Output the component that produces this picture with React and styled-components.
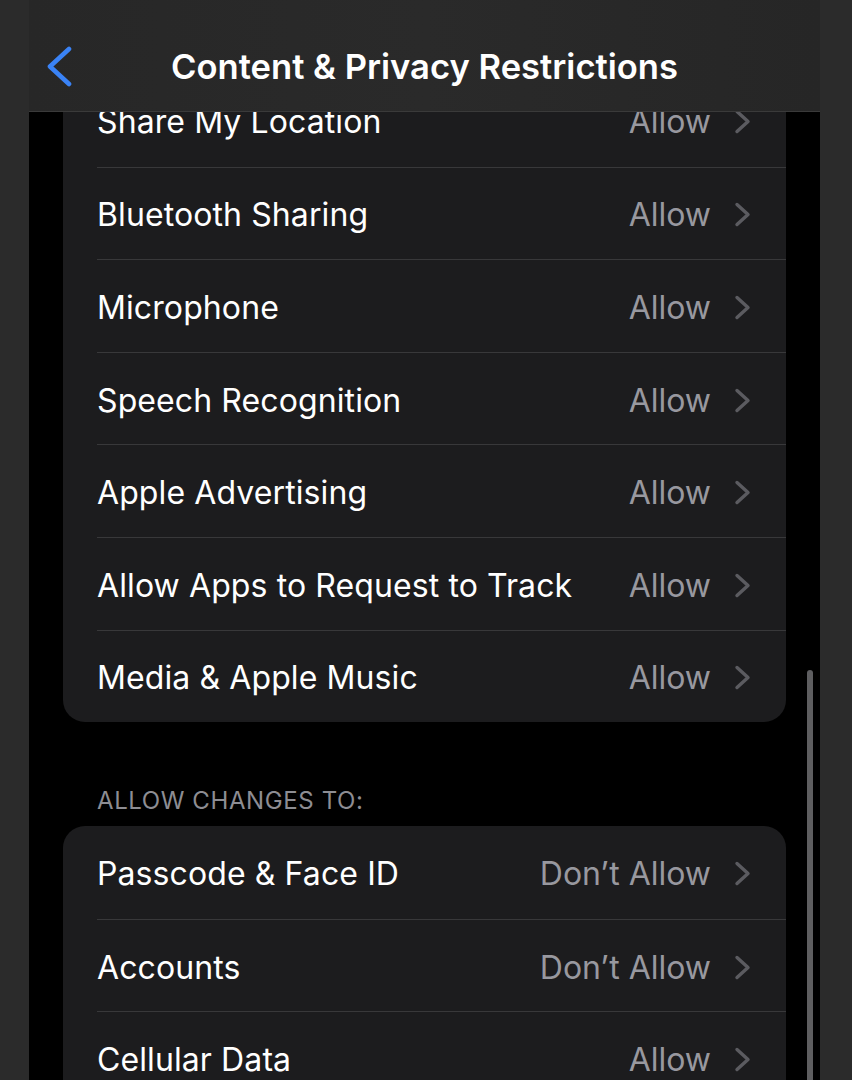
import React from 'react';
import styled, { createGlobalStyle } from 'styled-components';

const GlobalStyle = createGlobalStyle`
  html, body {
    margin: 0;
    padding: 0;
    background: #2b2b2b;
  }
  * {
    box-sizing: border-box;
  }
`;

const firstGroup = [
  { label: 'Share My Location', value: 'Allow' },
  { label: 'Bluetooth Sharing', value: 'Allow' },
  { label: 'Microphone', value: 'Allow' },
  { label: 'Speech Recognition', value: 'Allow' },
  { label: 'Apple Advertising', value: 'Allow' },
  { label: 'Allow Apps to Request to Track', value: 'Allow' },
  { label: 'Media & Apple Music', value: 'Allow' },
];

const changesGroup = [
  { label: 'Passcode & Face ID', value: 'Don’t Allow' },
  { label: 'Accounts', value: 'Don’t Allow' },
  { label: 'Cellular Data', value: 'Allow' },
];

const Chevron = () => (
  <svg width="17" height="25" viewBox="0 0 17 25">
    <polyline
      points="3,2.5 14,12.5 3,22.5"
      fill="none"
      stroke="#5b5b60"
      strokeWidth="3.4"
      strokeLinecap="round"
      strokeLinejoin="round"
    />
  </svg>
);

const BackChevron = () => (
  <svg width="26" height="41" viewBox="0 0 26 41">
    <polyline
      points="23,3 4,20.5 23,38"
      fill="none"
      stroke="#3a83f6"
      strokeWidth="4.6"
      strokeLinecap="round"
      strokeLinejoin="round"
    />
  </svg>
);

const SettingsRow = ({ label, value }) => (
  <Row>
    <RowInner>
      <Label>{label}</Label>
      <Value>{value}</Value>
      <Chevron />
    </RowInner>
  </Row>
);

const App = () => {
  return (
    <>
      <GlobalStyle />
      <Screen>
        <Side />
        <Phone>
          <List>
            <Card>
              {firstGroup.map((r) => (
                <SettingsRow key={r.label} {...r} />
              ))}
            </Card>
            <SectionTitle>ALLOW CHANGES TO:</SectionTitle>
            <Card>
              {changesGroup.map((r) => (
                <SettingsRow key={r.label} {...r} />
              ))}
            </Card>
          </List>
          <Header>
            <NavBar>
              <BackButton>
                <BackChevron />
              </BackButton>
              <Title>Content &amp; Privacy Restrictions</Title>
            </NavBar>
          </Header>
          <ScrollBar />
        </Phone>
        <Side $wide />
      </Screen>
    </>
  );
};

const Screen = styled.div`
  display: flex;
  width: 852px;
  height: 1080px;
  overflow: hidden;
  font-family: Inter, "Noto Sans", "Liberation Sans", sans-serif;
`;

const Side = styled.div`
  width: ${(p) => (p.$wide ? '32px' : '29px')};
  flex-shrink: 0;
  background: #2b2b2b;
`;

const Phone = styled.div`
  position: relative;
  width: 791px;
  height: 1080px;
  background: #000;
  overflow: hidden;
`;

const List = styled.div`
  display: flex;
  flex-direction: column;
  padding: 74px 34px 0;
`;

const Card = styled.div`
  background: #1c1c1e;
  border-radius: 22px;
  overflow: hidden;
`;

const Row = styled.div`
  height: 92.6px;
  padding-left: 34px;
  & + & > div {
    border-top: 1.5px solid #38383a;
  }
`;

const RowInner = styled.div`
  display: flex;
  align-items: center;
  height: 100%;
  padding: 3px 35px 0 0;
`;

const Label = styled.span`
  flex: 1;
  font-size: 32px;
  color: #ffffff;
  letter-spacing: 0.1px;
  white-space: nowrap;
`;

const Value = styled.span`
  font-size: 32px;
  color: #98989f;
  margin-right: 23px;
  white-space: nowrap;
`;

const SectionTitle = styled.div`
  padding: 64px 0 11px 34px;
  font-size: 24px;
  color: #8d8d93;
  letter-spacing: 0.6px;
`;

const Header = styled.div`
  position: absolute;
  top: 0;
  left: 0;
  right: 0;
  height: 112px;
  background: linear-gradient(90deg, #272727 0%, #2a2a2a 50%, #262626 100%);
  border-bottom: 1px solid #3a3a3a;
`;

const NavBar = styled.div`
  position: relative;
  display: flex;
  align-items: center;
  justify-content: center;
  height: 88px;
  margin-top: 22px;
`;

const BackButton = styled.div`
  position: absolute;
  left: 17px;
  top: 0;
  bottom: 0;
  display: flex;
  align-items: center;
`;

const Title = styled.h1`
  margin: 0;
  font-size: 34.6px;
  font-weight: 600;
  color: #ffffff;
  letter-spacing: 0;
`;

const ScrollBar = styled.div`
  position: absolute;
  left: 778px;
  top: 670px;
  width: 6px;
  height: 460px;
  border-radius: 3px;
  background: #5e5e60;
`;

export default App;
